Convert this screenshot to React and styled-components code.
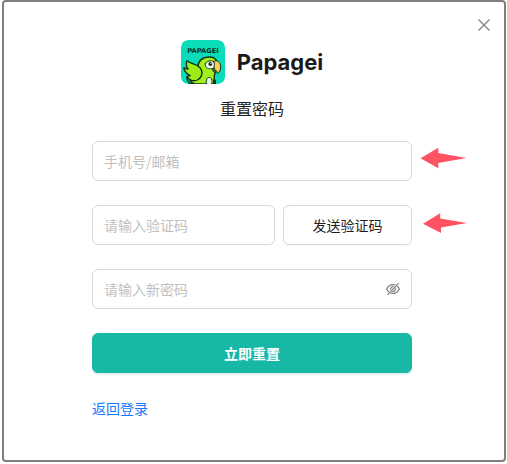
import React from 'react'
import styled, { createGlobalStyle, css } from 'styled-components'

const GlobalStyle = createGlobalStyle`
  * {
    box-sizing: border-box;
  }

  body {
    margin: 0;
    background: #fff;
    color: #1f1f1f;
    font-family: "Noto Sans CJK SC", "Liberation Sans", sans-serif;
    font-size: 14px;
  }

  button,
  input {
    font: inherit;
  }
`

const Logo = () => (
  <LogoBox viewBox="0 0 132 132" aria-hidden="true">
    <rect width="132" height="132" rx="21" fill="#08dcb9" />
    <text
      x="66"
      y="39"
      textAnchor="middle"
      fontFamily="DejaVu Sans, sans-serif"
      fontSize="20"
      fontWeight="700"
      fill="#0d2f2b"
    >
      PAPAGEI
    </text>
    <g stroke="#12301b" strokeWidth="4" strokeLinejoin="round" strokeLinecap="round">
      <path
        d="M50 82 C52 61 66 51 86 51 C101 51 111 60 109 76 C105 92 97 98 99 132 H42 C28 127 24 121 24 112 L50 82 Z"
        fill="#a2f01c"
      />
      <path
        d="M18 62 C29 74 41 68 57 83 C68 96 63 113 49 120 C38 125 22 121 18 109 L28 107 C18 103 11 95 8 84 L21 87 C15 79 15 70 18 62 Z"
        fill="#9cec16"
      />
      <path d="M18 110 C16 123 24 131 36 132" fill="none" />
      <path d="M73 71 C79 60 96 60 101 68 C104 79 98 88 89 86 C80 87 71 82 73 71 Z" fill="#f8fff4" strokeWidth="3" />
      <path
        d="M98 65 C108 57 119 67 119 80 C119 90 116 97 110 101 C109 91 99 91 99 81 C99 75 102 72 98 65 Z"
        fill="#f6cf63"
        strokeWidth="3"
      />
      <path d="M97 85 C92 92 97 99 106 96" fill="#53605b" strokeWidth="3" />
      <path d="M76 132 C74 119 79 109 88 113 C94 117 94 125 92 132" fill="#e7f4e7" strokeWidth="3" />
    </g>
    <circle cx="88" cy="72" r="6" fill="#12301b" />
    <circle cx="90" cy="70" r="2" fill="#fff" />
    <path d="M97 132 V119 C99 114 105 118 105 124 V132" fill="#12301b" />
  </LogoBox>
)

const CloseIcon = () => (
  <svg width="12" height="12" viewBox="0 0 12 12" aria-hidden="true">
    <path d="M0.5 0.5 L11.5 11.5 M11.5 0.5 L0.5 11.5" stroke="#858585" strokeWidth="1.4" />
  </svg>
)

const HiddenIcon = () => (
  <svg width="14" height="14" viewBox="0 0 14 14" fill="none" stroke="#7d7d7d" aria-hidden="true">
    <path d="M0.6 7 C3.4 1.2 10.6 1.2 13.4 7 C10.6 12.8 3.4 12.8 0.6 7 Z" strokeWidth="1.2" />
    <circle cx="7" cy="7" r="2.3" strokeWidth="1.2" />
    <path d="M1.3 13 L12.3 1.2" stroke="#fff" strokeWidth="2" />
    <path d="M1.6 12.6 L12.6 1.4" strokeWidth="1.3" />
  </svg>
)

const App = () => {
  return (
    <Page>
      <GlobalStyle />
      <Dialog role="dialog" aria-labelledby="reset-title">
        <CloseButton type="button" aria-label="关闭">
          <CloseIcon />
        </CloseButton>
        <Brand>
          <Logo />
          <BrandName>Papagei</BrandName>
        </Brand>
        <Title id="reset-title">重置密码</Title>
        <Form onSubmit={(e) => e.preventDefault()}>
          <Field>
            <Input type="text" placeholder="手机号/邮箱" aria-label="手机号/邮箱" />
            <Arrow viewBox="0 0 47 22" aria-hidden="true">
              <path d="M0.5 11.3 L18.3 0.7 V6 L46.5 11 L18.3 16 V21.3 Z" />
            </Arrow>
          </Field>
          <Field>
            <Input type="text" placeholder="请输入验证码" aria-label="验证码" />
            <Button type="button" $width="129px">发送验证码</Button>
            <Arrow viewBox="-3 -1 47 22" aria-hidden="true">
              <path d="M0 11.7 L17.2 1.2 V6.6 L44 11 L18 15.4 V21 Z" />
            </Arrow>
          </Field>
          <Field>
            <Input type="password" placeholder="请输入新密码" aria-label="新密码" />
            <EyeButton type="button" aria-label="显示密码">
              <HiddenIcon />
            </EyeButton>
          </Field>
          <Button type="submit" $primary>立即重置</Button>
        </Form>
        <BackLink href="#login">返回登录</BackLink>
      </Dialog>
    </Page>
  )
}

const Page = styled.main`
  padding: 0 1px 2px 2px;
`

const Dialog = styled.section`
  position: relative;
  display: flex;
  flex-direction: column;
  align-items: center;
  padding: 38px 92px 41px 88px;
  border: 2px solid #7f7f7f;
  border-radius: 4px;
`

const CloseButton = styled.button`
  position: absolute;
  top: 13px;
  right: 10px;
  display: flex;
  padding: 4px;
  border: 0;
  background: none;
  cursor: pointer;
`

const Brand = styled.header`
  display: flex;
  align-items: center;
  gap: 12px;
`

const LogoBox = styled.svg`
  width: 44px;
  height: 44px;
  border-radius: 7px;
`

const BrandName = styled.span`
  font-family: Inter, "Liberation Sans", sans-serif;
  font-size: 22px;
  font-weight: 700;
  line-height: 44px;
  color: #1a1a1a;
`

const Title = styled.h1`
  margin: 12px 0 20px;
  font-size: 16px;
  font-weight: 400;
  line-height: 25px;
`

const Form = styled.form`
  display: flex;
  flex-direction: column;
  gap: 24px;
  width: 100%;
  max-width: 320px;
`

const Field = styled.div`
  position: relative;
  display: flex;
  gap: 8px;
`

const Input = styled.input`
  flex: 1;
  min-width: 0;
  height: 40px;
  padding: 0 11px;
  border: 1px solid #d9d9d9;
  border-radius: 6px;
  background: #fff;
  color: inherit;

  &::placeholder {
    color: #bfbfbf;
  }
`

const Button = styled.button`
  width: ${({ $width }) => $width || '100%'};
  height: 40px;
  padding: 0;
  border: 1px solid #d9d9d9;
  border-radius: 6px;
  background: #fff;
  color: #1f1f1f;
  box-shadow: 0 2px 0 rgba(0, 0, 0, 0.02);
  cursor: pointer;

  ${({ $primary }) => $primary && css`
    border-color: #18b8a6;
    background: #18b8a6;
    color: #fff;
    font-weight: 700;
    box-shadow: 0 2px 0 rgba(5, 145, 120, 0.12);
  `}
`

const EyeButton = styled.button`
  position: absolute;
  top: 9px;
  right: 8px;
  display: flex;
  padding: 4px;
  border: 0;
  background: none;
  cursor: pointer;
`

const Arrow = styled.svg`
  position: absolute;
  top: 6px;
  left: 100%;
  width: 47px;
  height: 22px;
  margin-left: 8px;
  fill: #ff5364;
`

const BackLink = styled.a`
  width: 100%;
  max-width: 320px;
  margin-top: 24px;
  color: #1677ff;
  line-height: 22px;
  text-decoration: none;
`

export default App
